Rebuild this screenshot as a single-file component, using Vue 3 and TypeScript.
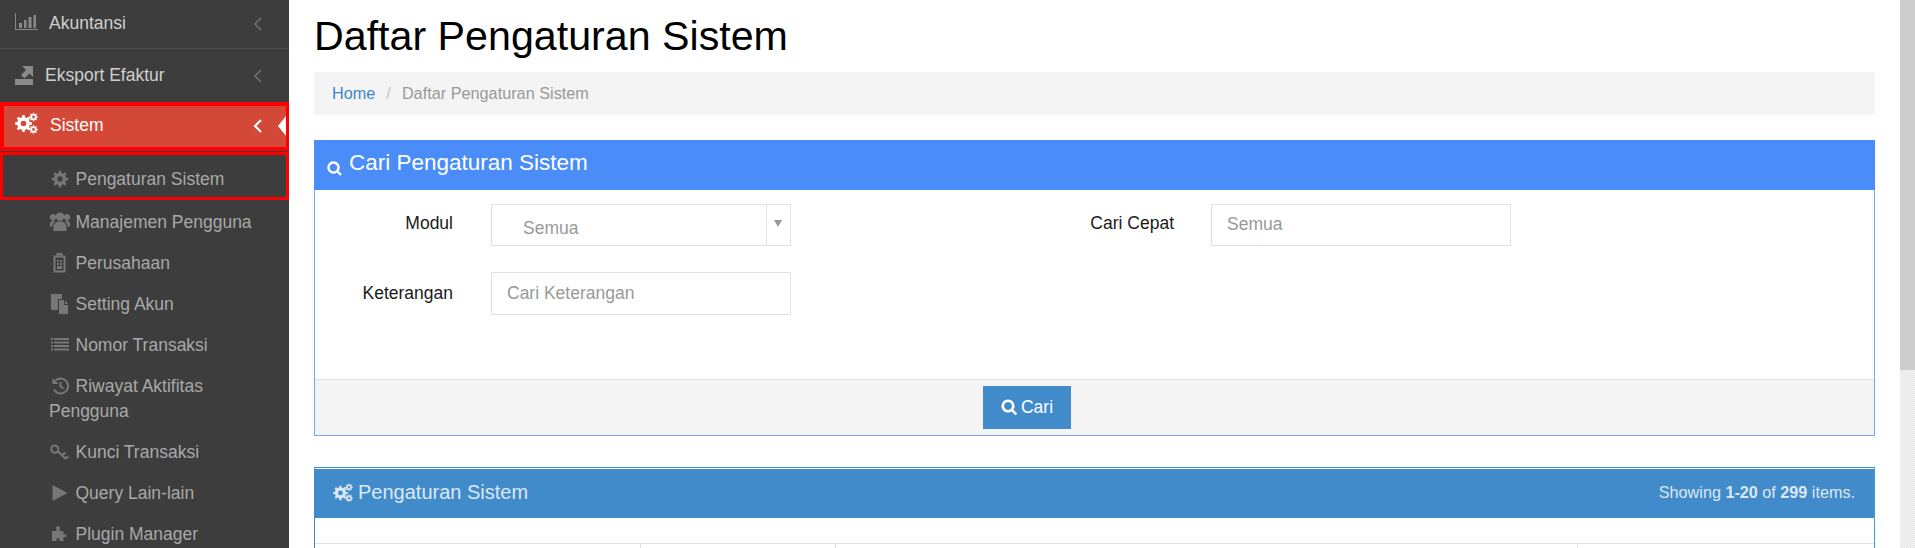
<script setup lang="ts">
type Shape = { d: string; s?: boolean }

function gear(cx: number, cy: number, ro: number, ri: number, teeth: number, hole: number): string {
  const pts: string[] = []
  const step = (Math.PI * 2) / teeth
  for (let i = 0; i < teeth; i++) {
    const a = i * step
    const seq: [number, number][] = [
      [ri, a - step * 0.5],
      [ri, a - step * 0.27],
      [ro, a - step * 0.18],
      [ro, a + step * 0.18],
      [ri, a + step * 0.27],
    ]
    for (const [r, t] of seq) {
      pts.push(`${(cx + r * Math.cos(t)).toFixed(2)} ${(cy + r * Math.sin(t)).toFixed(2)}`)
    }
  }
  const ring = `M${cx - hole} ${cy}a${hole} ${hole} 0 1 0 ${hole * 2} 0a${hole} ${hole} 0 1 0 ${-hole * 2} 0z`
  return `M${pts.join('L')}z${ring}`
}

const cogs = gear(8.5, 11.5, 8.5, 6.4, 8, 2.8) + gear(18.5, 5, 4.4, 3.2, 8, 1.4) + gear(18.5, 17.5, 4.4, 3.2, 8, 1.4)

const icons: Record<string, Shape[]> = {
  chart: [{ d: 'M0 0h1v16h22v1H0zM4 10h3v5H4zM9 7h2.500v8H9zM13.500 4h3v11h-3zM18.500 2h2.500v13h-2.500z' }],
  export: [{ d: 'M0 14h18v6H0zM7 1h11v11l-3.500-3.500-5 5-3.500-3.500 5-5z' }],
  cog: [{ d: gear(11, 10, 8.3, 6.2, 8, 2.7) }],
  users: [
    {
      d: 'M11 .5a4.200 4.200 0 1 0 .01 0zM4 2a3.200 3.200 0 1 0 .01 0zM18 2a3.200 3.200 0 1 0 .01 0zM4.500 19v-4.500c0-3 2.500-5 6.500-5s6.500 2 6.500 5V19zM1 13c0-3 1-4.500 3.500-4.500l1.500 1C4 11 3.500 12.500 3.500 14.500H1zM21 13c0-3-1-4.500-3.500-4.500l-1.500 1c2 1.500 2.500 3 2.500 5H21z',
    },
  ],
  building: [
    { d: 'M5.500 3.500h10v15h-10zM8.500 3.500V1h4v2.500', s: true },
    { d: 'M8 7h2v2H8zM11 7h2v2h-2zM8 10h2v2H8zM11 10h2v2h-2zM8 13h5v3H8z' },
  ],
  files: [{ d: 'M2 0h11v5H9v11H2zM10 6h5v5h4v9H10zM16 6.500l3 3.500h-3z' }],
  list: [{ d: 'M2 3h2v2H2zM5 3h15v2H5zM2 6.500h2v2H2zM5 6.500h15v2H5zM2 10h2v2H2zM5 10h15v2H5zM2 13.500h2v2H2zM5 13.500h15v2H5z' }],
  history: [
    { d: 'M6.500 4.500A7.500 7.500 0 1 1 5 13.500M11.500 6v4.500l3 2', s: true },
    { d: 'M3.500 2v6h6z' },
  ],
  key: [
    { d: 'M5.800 3.500a3.600 3.600 0 1 0 .01 0zM8.500 9l8.500 8', s: true },
    { d: 'M13 11.500l3-1.500 1 1.500-2.500 2zM16 15l3-1 1 1.500-3 2z' },
  ],
  play: [{ d: 'M3.500 2L18.500 10 3.500 18z' }],
  puzzle: [
    {
      d: 'M3 7h4.500V5.500a2 2 0 1 1 3 0V7h4v3.500H16a1.300 1.300 0 1 1 0 2.500h-1.500V17H10.500v-1.500a1.500 1.500 0 1 0-3 0V17H3z',
    },
  ],
  search: [{ d: 'M6.500 1.500a5 5 0 1 0 .01 0zM10 10l4 4', s: true }],
}

const subItems = [
  { label: 'Manajemen Pengguna', icon: 'users' },
  { label: 'Perusahaan', icon: 'building' },
  { label: 'Setting Akun', icon: 'files' },
  { label: 'Nomor Transaksi', icon: 'list' },
  { label: 'Riwayat Aktifitas Pengguna', icon: 'history' },
  { label: 'Kunci Transaksi', icon: 'key' },
  { label: 'Query Lain-lain', icon: 'play' },
  { label: 'Plugin Manager', icon: 'puzzle' },
]
</script>

<template>
  <div class="page">
    <aside class="sidebar">
      <div class="top-item first">
        <svg class="ic chart" width="23" height="17" viewBox="0 0 23 17"><path v-for="(p, i) in icons.chart" :key="i" :d="p.d" /></svg>
        <span class="top-label">Akuntansi</span>
        <svg class="angle" width="10" height="16" viewBox="0 0 10 16"><path d="M8 2L2 8l6 6" /></svg>
      </div>
      <div class="top-item second">
        <svg class="ic export" width="18" height="20" viewBox="0 0 18 20"><path v-for="(p, i) in icons.export" :key="i" :d="p.d" /></svg>
        <span class="top-label">Eksport Efaktur</span>
        <svg class="angle" width="10" height="16" viewBox="0 0 10 16"><path d="M8 2L2 8l6 6" /></svg>
      </div>
      <div class="top-item active">
        <svg class="ic cogs" width="23" height="22" viewBox="0 0 23 22"><path :d="cogs" /></svg>
        <span class="top-label">Sistem</span>
        <svg class="angle" width="10" height="16" viewBox="0 0 10 16"><path d="M8 2L2 8l6 6" /></svg>
        <span class="caret"></span>
      </div>
      <div class="sub-item current">
        <svg class="sub-ic" width="27" height="20" viewBox="0 0 27 20"><path v-for="(p, i) in icons.cog" :key="i" :d="p.d" /></svg>Pengaturan Sistem
      </div>
      <div class="sub-list">
        <div v-for="item in subItems" :key="item.label" class="sub-item">
          <svg class="sub-ic" width="27" height="20" viewBox="0 0 27 20">
            <path v-for="(p, i) in icons[item.icon]" :key="i" :d="p.d" :class="{ st: p.s }" />
          </svg>{{ item.label }}
        </div>
      </div>
    </aside>

    <main class="main">
      <h1 class="title">Daftar Pengaturan Sistem</h1>
      <div class="crumb">
        <a class="crumb-link">Home</a><span class="crumb-sep">/</span><span class="crumb-cur">Daftar Pengaturan Sistem</span>
      </div>

      <section class="card search-card">
        <header class="search-head">
          <svg class="search-ic" width="15" height="15" viewBox="0 0 15 15"><path v-for="(p, i) in icons.search" :key="i" :d="p.d" /></svg>
          <span>Cari Pengaturan Sistem</span>
        </header>
        <div class="form">
          <div class="field">
            <label class="lbl raised">Modul</label>
            <div class="select">
              <span class="select-val">Semua</span>
              <span class="select-arrow"><i></i></span>
            </div>
          </div>
          <div class="field quick">
            <label class="lbl raised">Cari Cepat</label>
            <div class="input raised-text">Semua</div>
          </div>
          <div class="field">
            <label class="lbl">Keterangan</label>
            <div class="input tall">Cari Keterangan</div>
          </div>
        </div>
        <footer class="search-foot">
          <button class="btn" type="button">
            <svg width="17" height="17" viewBox="0 0 17 17"><path d="M7 1.800a5.200 5.200 0 1 0 .01 0zM10.800 10.800l4.500 4.500" /></svg>
            Cari
          </button>
        </footer>
      </section>

      <section class="card list-card">
        <header class="list-head">
          <span class="list-title">
            <svg width="20" height="19" viewBox="0 0 23 22"><path :d="cogs" /></svg>
            Pengaturan Sistem
          </span>
          <span class="summary">Showing <b>1-20</b> of <b>299</b> items.</span>
        </header>
        <div class="list-gap"></div>
        <div class="table-row">
          <div class="cell c1"></div>
          <div class="cell c2"></div>
          <div class="cell c3"></div>
          <div class="cell c4"></div>
        </div>
      </section>
    </main>

    <div class="scrollbar"><div class="thumb"></div></div>
  </div>
</template>

<style>
html,
body {
  margin: 0;
  overflow: hidden;
  background: #fff;
}
</style>

<style scoped>
.page {
  display: flex;
  width: 1915px;
  height: 548px;
  overflow: hidden;
  font-family: "Liberation Sans", Arial, sans-serif;
  background: #fff;
}

/* Sidebar */
.sidebar {
  width: 289px;
  flex: none;
  background: #3d3d3d;
  overflow: hidden;
}
.top-item {
  position: relative;
  display: flex;
  align-items: center;
  box-sizing: border-box;
  padding-left: 15px;
  font-size: 17.5px;
  color: #cfcfcf;
}
.top-item.first {
  height: 49px;
  padding-bottom: 2px;
  border-bottom: 1px solid #4f4f4f;
}
.top-item.second {
  height: 53px;
  padding-bottom: 1px;
}
.top-item.active {
  height: 49px;
  padding: 0 0 2px 11px;
  border: 4px solid #ff0000;
  border-right-width: 3px;
  background: #d34836;
  color: #fff;
  width: 289px;
}
.ic {
  flex: none;
  fill: #8a8a8a;
}
.ic.chart {
  margin: -3px 11px 0 0;
}
.ic.export {
  margin-right: 12px;
  margin-top: -1px;
}
.ic.cogs {
  margin: -5px 12px 0 0;
  fill: #fff;
}
.top-label {
  flex: 1;
}
.angle {
  position: absolute;
  left: 253px;
  top: 50%;
  margin-top: -8px;
  fill: none;
  stroke: #6d6d6d;
  stroke-width: 1.6;
}
.active .angle {
  left: 249px;
  margin-top: -8.5px;
  stroke: #fff;
  stroke-width: 2.2;
}
.caret {
  position: absolute;
  right: 0;
  top: 10px;
  width: 0;
  height: 0;
  border-top: 10px solid transparent;
  border-bottom: 10px solid transparent;
  border-right: 8px solid #fff;
}
.sub-item {
  box-sizing: border-box;
  padding: 8px 12px 8px 49px;
  font-size: 17.5px;
  line-height: 25px;
  color: #a8a8a8;
}
.sub-item.current {
  width: 289px;
  height: 48px;
  margin-top: 1px;
  padding: 12px 0 0 46px;
  border: 3px solid #ff0000;
}
.sub-list {
  padding-top: 2px;
}
.sub-ic {
  vertical-align: -4px;
  margin-right: -0.5px;
  fill: #777;
}
.sub-ic .st {
  fill: none;
  stroke: #777;
  stroke-width: 2;
}

/* Main */
.main {
  flex: 1;
  min-width: 0;
  padding: 0 25px;
}
.title {
  margin: 0;
  padding-top: 11px;
  height: 61px;
  box-sizing: content-box;
  font-size: 41.2px;
  line-height: 50px;
  font-weight: 400;
  color: #000;
}
.crumb {
  height: 43px;
  line-height: 43px;
  padding-left: 18px;
  background: #f4f4f4;
  font-size: 16.25px;
}
.crumb-link {
  color: #3f86c7;
}
.crumb-sep {
  margin: 0 11px;
  color: #c4c4c4;
}
.crumb-cur {
  color: #999;
}
.card {
  box-sizing: border-box;
}
.search-card {
  margin-top: 25px;
  border: 1px solid #7aa8ee;
  border-top: 0;
}
.search-head {
  display: flex;
  align-items: center;
  height: 50px;
  margin: 0 -1px;
  padding-left: 13px;
  background: #4b8df8;
  color: #fff;
  font-size: 22.5px;
}
.search-head span {
  margin-top: -5px;
}
.search-ic {
  margin: 6px 7px 0 0;
  fill: none;
  stroke: #fff;
  stroke-width: 2.4;
}
.form {
  display: grid;
  grid-template-columns: 476px 1fr;
  align-items: start;
  align-content: start;
  row-gap: 26px;
  height: 189px;
  box-sizing: border-box;
  padding-top: 14px;
}
.field {
  display: flex;
  align-items: center;
}
.lbl {
  width: 138px;
  flex: none;
  text-align: right;
  font-size: 17.5px;
  color: #1a1a1a;
}
.lbl.raised {
  margin-top: -3px;
}
.quick .lbl {
  width: 383px;
}
.select,
.input {
  box-sizing: border-box;
  width: 300px;
  height: 42px;
  margin-left: 38px;
  border: 1px solid #e1e1e1;
  font-size: 17.5px;
  color: #999;
}
.quick .input {
  margin-left: 37px;
}
.select {
  display: flex;
  justify-content: space-between;
}
.select-val {
  padding: 13px 0 0 31px;
}
.select-arrow {
  width: 23px;
  border-left: 1px solid #e1e1e1;
  position: relative;
}
.select-arrow i {
  position: absolute;
  left: 7px;
  top: 15px;
  border-top: 7px solid #999;
  border-left: 4px solid transparent;
  border-right: 4px solid transparent;
}
.input {
  display: flex;
  align-items: center;
  padding-left: 15px;
}
.input.raised-text {
  padding-bottom: 2px;
}
.input.tall {
  height: 43px;
}
.search-foot {
  display: flex;
  height: 56px;
  box-sizing: border-box;
  padding: 6px 0 0 668px;
  background: #f4f4f4;
  border-top: 1px solid #e1e1e1;
}
.btn {
  display: flex;
  align-items: center;
  justify-content: center;
  gap: 3px;
  width: 88px;
  height: 43px;
  padding: 0;
  border: 0;
  background: #428bca;
  color: #fff;
  font: inherit;
  font-size: 17.5px;
}
.btn svg {
  fill: none;
  stroke: #fff;
  stroke-width: 2.6;
}
.list-card {
  margin-top: 31px;
  border: 1px solid #428bca;
  border-right-color: #3ea0c8;
  border-bottom: 0;
}
.list-head {
  display: flex;
  align-items: center;
  justify-content: space-between;
  box-sizing: border-box;
  height: 49px;
  margin-top: 1px;
  padding: 0 19px 2px 18px;
  background: #428bca;
  color: #dbe8f4;
}
.list-title {
  display: flex;
  align-items: center;
  gap: 5px;
  font-size: 20px;
}
.list-title svg {
  fill: #dbe8f4;
}
.summary {
  font-size: 16.2px;
}
.list-gap {
  height: 25px;
}
.table-row {
  display: flex;
  height: 10px;
  border-top: 1px solid #e1e1e1;
}
.cell {
  border-right: 1px solid #e1e1e1;
}
.c1 {
  width: 325px;
}
.c2 {
  width: 194px;
}
.c3 {
  width: 741px;
}
.c4 {
  flex: 1;
  border-right: 0;
}

/* Scrollbar */
.scrollbar {
  width: 15px;
  flex: none;
  background-color: #f1f1f1;
  background-image: conic-gradient(#e4e4e4 25%, #f6f6f6 0 50%, #e4e4e4 0 75%, #f6f6f6 0);
  background-size: 2px 2px;
}
.thumb {
  height: 370px;
  background: #cdcdcd;
}
</style>
